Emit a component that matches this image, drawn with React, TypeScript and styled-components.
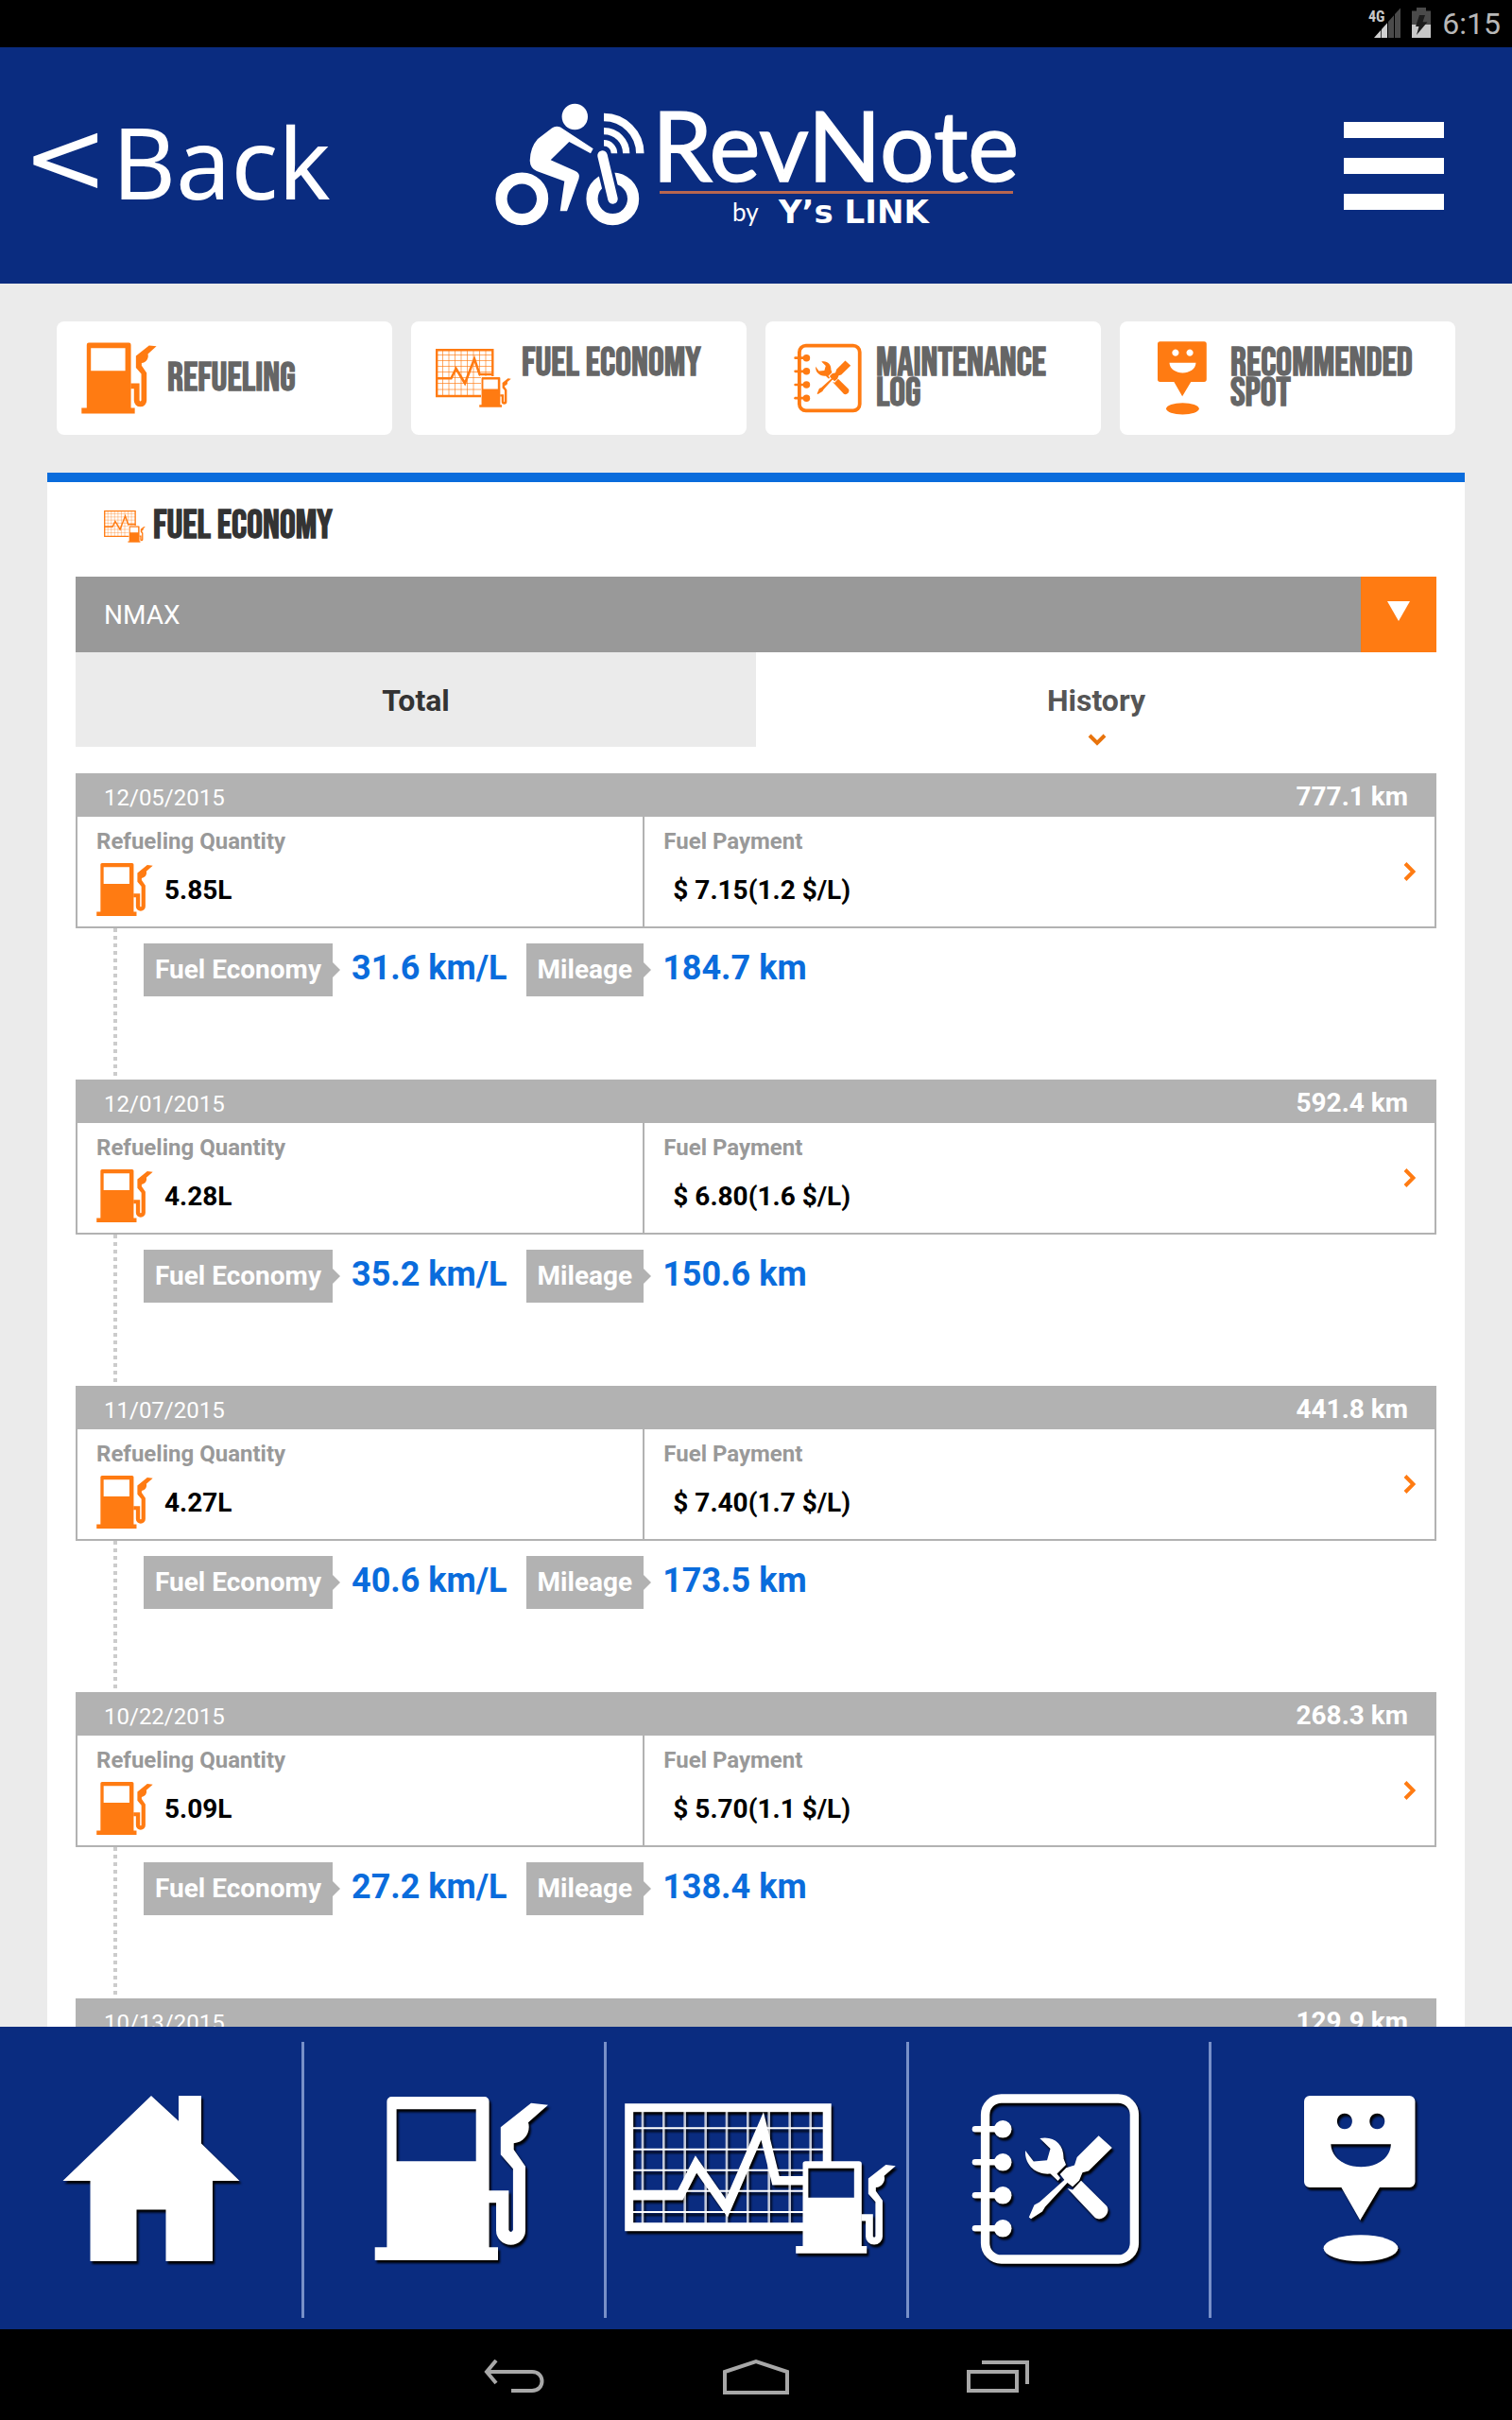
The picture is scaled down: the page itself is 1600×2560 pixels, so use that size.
import React, { useState } from "react";
import styled, { createGlobalStyle, css } from "styled-components";

const navy = "#0a2c80";
const blue = "#0a6cdc";
const orange = "#ff7b12";
const grey = "#b2b2b2";
const condensed = `"Bebas Neue", "Roboto Condensed", "Liberation Sans Narrow", "Arial Narrow", "Liberation Sans", sans-serif`;

const GlobalStyle = createGlobalStyle`
  *, *::before, *::after { box-sizing: border-box; }
  body { margin: 0; background: #000; font-family: Roboto, "Liberation Sans", sans-serif; }
  button { border: 0; padding: 0; background: none; font: inherit; color: inherit; cursor: pointer; }
  a { color: inherit; text-decoration: none; }
  svg { display: block; }
  h1, h2, p { margin: 0; }
`;

const Screen = styled.div`
  display: flex;
  flex-direction: column;
  height: 100vh;
`;

/* ---------- system status bar ---------- */

const StatusBar = styled.div`
  display: flex;
  justify-content: flex-end;
  align-items: center;
  gap: 11px;
  flex: none;
  height: 50px;
  padding-right: 12px;
  background: #000;
  color: #b8b8b8;
  font-size: 32px;
`;

/* ---------- header ---------- */

const Header = styled.header`
  display: grid;
  grid-template-columns: 1fr auto 1fr;
  align-items: center;
  flex: none;
  height: 250px;
  padding: 0 24px;
  background: ${navy};
  color: #fff;
`;

const BackLink = styled.a`
  display: flex;
  align-items: flex-start;
  gap: 4px;
  padding-bottom: 8px;
  font: 104px/120px "Noto Sans", sans-serif;
`;

const BackSign = styled.span`
  font: 108px/112px "DejaVu Sans", sans-serif;
`;

const Logo = styled.svg`
  width: 560px;
  height: 150px;
`;

const MenuButton = styled.button`
  display: flex;
  flex-direction: column;
  justify-self: end;
  gap: 21px;
  width: 106px;
  margin-right: 48px;
`;

const MenuBar = styled.span`
  height: 17px;
  background: #fff;
`;

/* ---------- scrolling content ---------- */

const Main = styled.main`
  flex: 1;
  min-height: 0;
  overflow-y: auto;
  scrollbar-width: none;
  background: #ebebeb;
`;

const Shortcuts = styled.nav`
  display: grid;
  grid-template-columns: repeat(4, 1fr);
  gap: 20px;
  padding: 40px 60px;
`;

const Shortcut = styled.a`
  display: flex;
  align-items: center;
  height: 120px;
  padding: 0 24px 0 15px;
  border-radius: 8px;
  background: #fff;
  color: #666;
  font: bold 42px/32px ${condensed};
`;

const ShortcutIcon = styled.span`
  display: flex;
  flex: none;
  justify-content: center;
  width: 102px;
  color: ${orange};
`;

const ShortcutLabel = styled.span<{ $twoLines?: boolean }>`
  padding-top: 2px;
  ${(p) => p.$twoLines && css`min-height: 66px;`}
`;

const Panel = styled.section`
  margin: 0 50px;
  padding: 0 30px 40px;
  border-top: 10px solid ${blue};
  background: #fff;
`;

const PanelTitle = styled.h1`
  display: flex;
  align-items: center;
  gap: 8px;
  height: 100px;
  padding: 0 30px 6px;
  color: #333;
  font: bold 42px/32px ${condensed};
  svg { color: ${orange}; }
`;

const SelectRow = styled.label`
  display: flex;
  height: 80px;
  background: #999;
`;

const VehicleSelect = styled.select`
  flex: 1;
  appearance: none;
  padding: 0 30px;
  border: 0;
  outline: 0;
  background: transparent;
  color: #fff;
  font: 28px Roboto, sans-serif;
`;

const SelectArrow = styled.span`
  display: flex;
  justify-content: center;
  width: 80px;
  padding-top: 26px;
  background: ${orange};
  color: #fff;
`;

const Tabs = styled.div`
  display: grid;
  grid-template-columns: 1fr 1fr;
  margin-bottom: 28px;
`;

const Tab = styled.button<{ $active: boolean }>`
  position: relative;
  height: 100px;
  padding-top: 2px;
  background: ${(p) => (p.$active ? "#fff" : "#ebebeb")};
  color: ${(p) => (p.$active ? "#555" : "#333")};
  font-size: 32px;
  font-weight: 700;
`;

const TabMark = styled.svg`
  position: absolute;
  bottom: 0;
  left: 50%;
  width: 20px;
  height: 14px;
  margin-left: -9px;
`;

const EntryHead = styled.header`
  display: flex;
  align-items: baseline;
  justify-content: space-between;
  height: 46px;
  padding: 4px 30px 0;
  background: ${grey};
  color: #fff;
  font-size: 24px;
  line-height: 42px;
`;

const Odometer = styled.span`
  font-size: 28px;
  font-weight: 700;
`;

const EntryBody = styled.a`
  display: grid;
  grid-template-columns: 5fr 7fr;
  border: 2px solid ${grey};
  border-top: 0;
`;

const Cell = styled.div`
  padding: 10px 20px;
  & + & {
    display: flex;
    align-items: center;
    justify-content: space-between;
    border-left: 2px solid ${grey};
  }
`;

const CellLabel = styled.p`
  margin-bottom: 6px;
  color: #999;
  font-size: 24px;
  font-weight: 700;
  line-height: 32px;
`;

const CellValue = styled.p<{ $indent?: boolean }>`
  display: flex;
  align-items: center;
  gap: 12px;
  height: 58px;
  padding-left: ${(p) => (p.$indent ? 10 : 0)}px;
  color: #000;
  font-size: 28px;
  font-weight: 700;
  svg { color: ${orange}; }
`;

const EntryDetail = styled.div`
  display: flex;
  height: 160px;
  padding-left: 40px;
`;

const Trail = styled.div`
  width: 4px;
  margin-right: 28px;
  background: repeating-linear-gradient(#ccc 0 4px, transparent 4px 8px);
`;

const Stats = styled.div`
  display: flex;
  align-items: flex-start;
  gap: 20px;
  padding-top: 16px;
`;

const Chip = styled.span`
  position: relative;
  padding: 0 12px;
  background: ${grey};
  color: #fff;
  font-size: 28px;
  font-weight: 700;
  line-height: 56px;
  &::after {
    content: "";
    position: absolute;
    top: 20px;
    left: 100%;
    border: 8px solid transparent;
    border-right-width: 0;
    border-left-color: ${grey};
  }
`;

const StatValue = styled.span`
  color: ${blue};
  font-size: 36px;
  font-weight: 700;
  line-height: 52px;
`;

/* ---------- bottom bars ---------- */

const BottomNav = styled.nav`
  display: grid;
  grid-template-columns: repeat(5, 1fr);
  flex: none;
  height: 320px;
  background: ${navy};
  color: #fff;
`;

const BottomLink = styled.a`
  position: relative;
  display: flex;
  justify-content: center;
  & + &::before {
    content: "";
    position: absolute;
    top: 16px;
    bottom: 12px;
    left: -1px;
    width: 3px;
    background: #7890c8;
  }
  svg { filter: drop-shadow(2px 3px 1px #000); }
`;

const SystemNav = styled.div`
  display: flex;
  justify-content: center;
  flex: none;
  height: 96px;
  background: #000;
  color: #a8a8a8;
`;

const SystemButton = styled.button`
  display: flex;
  justify-content: center;
  align-items: center;
  width: 256px;
  padding-top: 4px;
`;

/* ---------- drawings: one 320 × 320 grid, cropped by `view` ---------- */

type IconProps = { width: number; height: number; view?: string };

const PumpShape = () => (
  <>
    <path
      fillRule="evenodd"
      d="M94.4 74H192.6a5 5 0 0 1 5 5V233.3H207V247H76.7V233.3H89.4V79a5 5 0 0 1 5-5zM99.6 87.3V142.3H183.7V87.3z"
    />
    <path d="M197 173.3H218.4V215q2.2 4 4.5 0V150.3L209.8 135.3V106.3L242 80.7 260 82.7 239 101.3c3 10-4 21-15.3 22V130L236 147.7V215.5a15.5 15.2 0 0 1-31 0V186.3H197z" />
  </>
);

const PumpIcon = ({ view = "76 73 185 175", ...size }: IconProps) => (
  <svg {...size} viewBox={view} fill="currentColor" aria-hidden>
    <PumpShape />
  </svg>
);

const HomeIcon = ({ view = "66 72 188 176", ...size }: IconProps) => (
  <svg {...size} viewBox={view} fill="currentColor" aria-hidden>
    <path d="M160 73 189 99.7V73H213V123.5L253.5 163H225V248H175.5V193.5H144.5V248H95.5V163H66.5z" />
  </svg>
);

const WideChartIcon = ({ view = "21 81 288 160", ...size }: IconProps) => (
  <svg {...size} viewBox={view} aria-hidden>
    <mask id="wide-chart-cut" maskUnits="userSpaceOnUse" x="0" y="60" width="320" height="200">
      <rect x="0" y="60" width="320" height="200" fill="#fff" />
      <rect x="211" y="143" width="58" height="96" fill="#000" />
    </mask>
    <g mask="url(#wide-chart-cut)" fill="none" stroke="currentColor">
      <rect x="25.7" y="85.7" width="209.5" height="126" strokeWidth="9" />
      <path
        d="M40 86V210M62.3 86V210M84.7 86V210M106.7 86V210M129 86V210M151.3 86V210M173.7 86V210M195.7 86V210M217.7 86V210"
        strokeWidth="2.6"
        opacity="0.75"
      />
      <path d="M26 107.3H234M26 129.7H234M26 151.7H234M26 173.7H234M26 196H234" strokeWidth="2" />
      <path d="M30 178.7H79.5L96.5 145.5 129 192 166.7 105 181 162.7H212" strokeWidth="9.5" strokeMiterlimit="10" />
    </g>
    <g transform="translate(158 100.6) scale(.576 .563)" fill="currentColor">
      <PumpShape />
    </g>
  </svg>
);

const ChartIcon = (size: IconProps) => (
  <svg {...size} viewBox="0 0 80 62" fill="none" stroke="currentColor" aria-hidden>
    <path d="M48 50H1.2V1.2H60.3V29" strokeWidth="2.4" />
    <path
      d="M7.5 1V50M14 1V50M20.5 1V50M27 1V50M33.5 1V50M40 1V50M46.5 1V29M53 1V29M1 6.5H60M1 12.5H60M1 18.5H60M1 24.5H60M1 30.5H48M1 36.5H48M1 43H48"
      strokeWidth="1"
      opacity="0.65"
    />
    <path d="M1 31.3H16.4L21.6 21 31 36.5 41 10.5 46.5 27H61" strokeWidth="2.6" />
    <g transform="translate(32.2 16.5) scale(.183)" fill="currentColor" stroke="none">
      <PumpShape />
    </g>
  </svg>
);

const NotebookIcon = ({ view = "68 71 178 180", ...size }: IconProps) => (
  <svg {...size} viewBox={view} fill="currentColor" aria-hidden>
    <rect x="82.6" y="76" width="157.8" height="170" rx="17" fill="none" stroke="currentColor" strokeWidth="9.4" />
    {[108.3, 143.3, 178.3, 213.3].map((y) => (
      <g key={y}>
        <path d={`M72 ${y}H101`} stroke="currentColor" strokeWidth="6.6" strokeLinecap="round" />
        <circle cx="101.2" cy={y} r="9.3" />
      </g>
    ))}
    <path d="M125 131 133.8 142.5 148 141.3 151.5 129 140.3 118C155 115 166 124 165.5 139.5L168 146 158.5 155.5 162 160 159.5 163 151.5 155.5C136 157 124 146 125 131z" />
    <path d="M184 162.7 211 189.5C216 196 207 207 199 202.3L169.5 171 175 172.5z" />
    <path d="M202.6 115.3 216.8 128 192 152.5 185.5 154.3 182 162.7 175 169.3 169.5 165 146 190.5 143 195.5 131 203.3 128.8 201.5 134.5 188.5 140 185.5 166.3 162 161.7 156 168.2 149.3 177 146.5 179.7 138z" />
  </svg>
);

const SpotIcon = ({ view = "100 73 118 176", ...size }: IconProps) => (
  <svg {...size} viewBox={view} fill="currentColor" aria-hidden>
    <path
      fillRule="evenodd"
      d="M106 73H211.5a6 6 0 0 1 6 6V164a6 6 0 0 1-6 6H180L159.3 204.7 139.4 170H106a6 6 0 0 1-6-6V79a6 6 0 0 1 6-6zM142.9 91.7a8 8.3 0 1 0 .01 0zM177.3 91.7a8 8.3 0 1 0 .01 0zM128.3 124.3c2 32 62 32 63.6 0z"
    />
    <ellipse cx="160" cy="234.3" rx="39.4" ry="14" />
  </svg>
);

const LogoMark = () => (
  <Logo viewBox="520 100 560 150" role="img" aria-label="RevNote by Y’s LINK">
    <g fill="#fff">
      <circle cx="608.3" cy="123.5" r="13.7" />
      <path d="M593 134.5 627.7 157.3 625 162.3 602.3 150 582.7 169.3 608 180.5Q614.5 183 612.5 189L600 223.3H592.7L597.3 191.7 568 181Q561 178 560.7 170Q561 156 569 147L584 135.5Q588 132.5 593 134.5z" />
    </g>
    <g fill="none" stroke="#fff">
      <circle cx="552.3" cy="210.3" r="21.8" strokeWidth="12.2" />
      <circle cx="648.3" cy="210.3" r="21.8" strokeWidth="12.2" />
      <path d="M639 124A38.3 38.3 0 0 1 677.3 162.3" strokeWidth="8.5" />
      <path d="M639 138.6A23.7 23.7 0 0 1 662.7 162.3" strokeWidth="7.3" />
      <path d="M639 151.3A11 11 0 0 1 650 162.3" strokeWidth="6.5" />
      <path d="M637.5 165.5 648.5 210.5" stroke={navy} strokeWidth="17" strokeLinecap="round" />
      <path d="M637.5 164.5 648.5 210.5" strokeWidth="10.5" strokeLinecap="round" />
    </g>
    <path d="M698 203.5H1072" stroke="#b8664f" strokeWidth="3" />
    <text x="690" y="192" fill="#fff" stroke="#fff" strokeWidth="1.5" fontFamily="Lato, sans-serif" fontSize="102">
      RevNote
    </text>
    <text x="775" y="234" fill="#fff" fontFamily="Lato, sans-serif" fontSize="26">
      by
    </text>
    <text x="824" y="236" fill="#fff" fontFamily="'DejaVu Sans', sans-serif" fontWeight="bold" fontSize="34">
      Y’s LINK
    </text>
  </Logo>
);

const SignalIcon = () => (
  <svg width="34" height="34" viewBox="0 0 34 34" aria-hidden>
    <text x="0" y="15" fill="#c8c8c8" fontFamily="'Roboto Condensed', 'Liberation Sans Narrow', sans-serif" fontWeight="bold" fontSize="16">
      4G
    </text>
    <path d="M6 32 13.3 23.8V32zM14 23 20 16.2V32H14z" fill="#d0d0d0" />
    <path d="M21 15 27 8.3V32H21zM28 7 34 .4V32H28z" fill="#4a4a4a" />
  </svg>
);

const BatteryIcon = () => (
  <svg width="22" height="34" viewBox="0 0 22 34" aria-hidden>
    <path d="M6 0H16V3.5H21V18H1V3.5H6z" fill="#4a4a4a" />
    <path d="M1 18H21V32H1z" fill="#c8c8c8" />
    <path d="M9 8H15L12.5 15.3H17.5L6 29 8.5 20H5z" fill="#1c1c1c" />
  </svg>
);

/* ---------- data ---------- */

const shortcuts = [
  { label: "REFUELING", icon: <PumpIcon width={80} height={76} /> },
  { label: "FUEL ECONOMY", icon: <ChartIcon width={80} height={62} />, twoLines: true },
  { label: "MAINTENANCE LOG", icon: <NotebookIcon width={72} height={74} /> },
  { label: "RECOMMENDED SPOT", icon: <SpotIcon width={52} height={78} /> },
];

const entries = [
  { date: "12/05/2015", odometer: "777.1 km", quantity: "5.85L", payment: "$ 7.15(1.2 $/L)", economy: "31.6 km/L", mileage: "184.7 km" },
  { date: "12/01/2015", odometer: "592.4 km", quantity: "4.28L", payment: "$ 6.80(1.6 $/L)", economy: "35.2 km/L", mileage: "150.6 km" },
  { date: "11/07/2015", odometer: "441.8 km", quantity: "4.27L", payment: "$ 7.40(1.7 $/L)", economy: "40.6 km/L", mileage: "173.5 km" },
  { date: "10/22/2015", odometer: "268.3 km", quantity: "5.09L", payment: "$ 5.70(1.1 $/L)", economy: "27.2 km/L", mileage: "138.4 km" },
  { date: "10/13/2015", odometer: "129.9 km" },
];

const full = { width: 320, height: 320, view: "0 0 320 320" };

const bottomLinks = [
  { label: "Home", icon: <HomeIcon {...full} /> },
  { label: "Refueling", icon: <PumpIcon {...full} /> },
  { label: "Fuel economy", icon: <WideChartIcon {...full} /> },
  { label: "Maintenance log", icon: <NotebookIcon {...full} /> },
  { label: "Recommended spot", icon: <SpotIcon {...full} /> },
];

export default function App() {
  const [tab, setTab] = useState("History");

  return (
    <Screen>
      <GlobalStyle />
      <StatusBar>
        <SignalIcon />
        <BatteryIcon />
        <span>6:15</span>
      </StatusBar>

      <Header>
        <BackLink href="#back">
          <BackSign>&lt;</BackSign>Back
        </BackLink>
        <LogoMark />
        <MenuButton aria-label="Menu">
          <MenuBar />
          <MenuBar />
          <MenuBar />
        </MenuButton>
      </Header>

      <Main>
        <Shortcuts>
          {shortcuts.map((s) => (
            <Shortcut key={s.label} href="#shortcut">
              <ShortcutIcon>{s.icon}</ShortcutIcon>
              <ShortcutLabel $twoLines={s.twoLines}>{s.label}</ShortcutLabel>
            </Shortcut>
          ))}
        </Shortcuts>

        <Panel>
          <PanelTitle>
            <ChartIcon width={44} height={34} />
            FUEL ECONOMY
          </PanelTitle>
          <SelectRow>
            <VehicleSelect aria-label="Vehicle">
              <option>NMAX</option>
            </VehicleSelect>
            <SelectArrow>
              <svg width="24" height="22" viewBox="0 0 24 22" fill="currentColor" aria-hidden>
                <path d="M0 0H24L12 21z" />
              </svg>
            </SelectArrow>
          </SelectRow>
          <Tabs role="tablist">
            {["Total", "History"].map((name) => (
              <Tab key={name} role="tab" aria-selected={tab === name} $active={tab === name} onClick={() => setTab(name)}>
                {name}
                {tab === name && (
                  <TabMark viewBox="0 0 20 14" fill="none" stroke="#e8730c" strokeWidth="4" aria-hidden>
                    <path d="M2 2 10 10 18 2" />
                  </TabMark>
                )}
              </Tab>
            ))}
          </Tabs>

          {entries.map((e) => (
            <article key={e.date}>
              <EntryHead>
                <time>{e.date}</time>
                <Odometer>{e.odometer}</Odometer>
              </EntryHead>
              {e.quantity && (
                <>
                  <EntryBody href="#entry">
                    <Cell>
                      <CellLabel>Refueling Quantity</CellLabel>
                      <CellValue>
                        <PumpIcon width={60} height={58} />
                        {e.quantity}
                      </CellValue>
                    </Cell>
                    <Cell>
                      <div>
                        <CellLabel>Fuel Payment</CellLabel>
                        <CellValue $indent>{e.payment}</CellValue>
                      </div>
                      <svg width="13" height="20" viewBox="0 0 13 20" fill="none" stroke={orange} strokeWidth="4" aria-hidden>
                        <path d="M2 1.5 10.5 10 2 18.5" />
                      </svg>
                    </Cell>
                  </EntryBody>
                  <EntryDetail>
                    <Trail />
                    <Stats>
                      <Chip>Fuel Economy</Chip>
                      <StatValue>{e.economy}</StatValue>
                      <Chip>Mileage</Chip>
                      <StatValue>{e.mileage}</StatValue>
                    </Stats>
                  </EntryDetail>
                </>
              )}
            </article>
          ))}
        </Panel>
      </Main>

      <BottomNav>
        {bottomLinks.map((l) => (
          <BottomLink key={l.label} href="#nav" aria-label={l.label}>
            {l.icon}
          </BottomLink>
        ))}
      </BottomNav>

      <SystemNav>
        <SystemButton aria-label="Back">
          <svg width="66" height="36" viewBox="0 0 66 36" fill="none" stroke="currentColor" strokeWidth="4" aria-hidden>
            <path d="M14 1 4 13 14 25M4 13H52C66 13 66 33 52 33H30" />
          </svg>
        </SystemButton>
        <SystemButton aria-label="Home">
          <svg width="70" height="38" viewBox="0 0 70 38" fill="none" stroke="currentColor" strokeWidth="4" aria-hidden>
            <path d="M2 36V14L35 3 68 14V36z" />
          </svg>
        </SystemButton>
        <SystemButton aria-label="Recent apps">
          <svg width="66" height="36" viewBox="0 0 66 36" fill="none" stroke="currentColor" strokeWidth="4" aria-hidden>
            <path d="M2 13H53V33H2zM16 3H64V26" />
          </svg>
        </SystemButton>
      </SystemNav>
    </Screen>
  );
}
